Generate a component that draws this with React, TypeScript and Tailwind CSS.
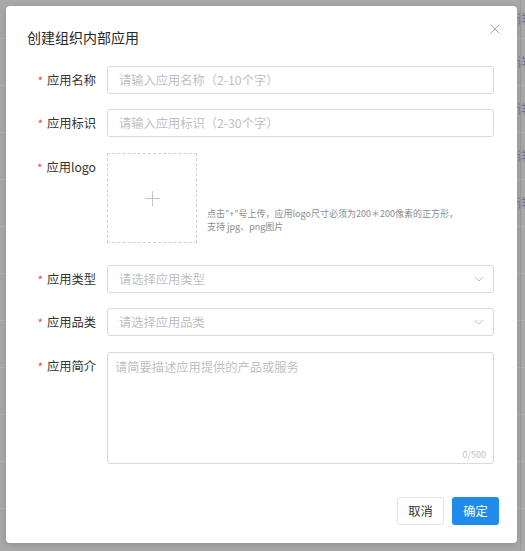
import { useState } from 'react';

const rows = Array.from({ length: 12 });

function Required({ label }: { label: string }) {
  return (
    <div className="w-[66px] h-[28px] flex items-center justify-end shrink-0 text-[12.25px] text-[#333333]">
      <span className="text-[#f04134] mr-[4px] text-[11px] leading-none">*</span>
      <span>{label}</span>
    </div>
  );
}

function Chevron() {
  return (
    <svg width="10" height="6" viewBox="0 0 10 6" fill="none" className="shrink-0">
      <path d="M1 1l4 4 4-4" stroke="#bfbfbf" strokeWidth="1" />
    </svg>
  );
}

export default function App() {
  const [name, setName] = useState('');
  const [ident, setIdent] = useState('');
  const [desc, setDesc] = useState('');

  return (
    <div className="relative w-[525px] h-[551px] overflow-hidden bg-[#a9a9a9] font-['Noto_Sans_CJK_SC',sans-serif]">
      {/* page behind the mask */}
      <div className="flex flex-col pt-[-8px]">
        {rows.map((_, i) => (
          <div key={i} className="h-[47px] shrink-0 flex items-center justify-end border-b border-[#b4b4b4] first:h-[39px]">
            <span className="w-[8px] overflow-hidden text-[12px] text-[#56729a] whitespace-nowrap">
              {i < 5 ? '详情' : ''}
            </span>
          </div>
        ))}
      </div>
      <div className="absolute top-0 bottom-0 right-[4px] w-px bg-[#9a9a9a]" />

      {/* dialog */}
      <div className="absolute left-[6px] top-[6px] w-[511px] h-[537px] bg-white rounded-[4px] shadow-[0_2px_8px_rgba(0,0,0,0.15)] flex flex-col">
        <div className="pt-[21px] pl-[21px] h-[41px] text-[14px] leading-[20px] text-[#262626]">
          创建组织内部应用
        </div>
        <button className="absolute right-[17px] top-[18px] w-[10px] h-[10px] flex items-center justify-center">
          <svg width="10" height="10" viewBox="0 0 10 10">
            <path d="M0.5 0.5l9 9M9.5 0.5l-9 9" stroke="#a6a6a6" strokeWidth="1" />
          </svg>
        </button>

        <div className="mt-[19px] pl-[24px] pr-[23px] flex flex-col">
          <div className="flex gap-[11px] mb-[15px]">
            <Required label="应用名称" />
            <input
              value={name}
              onChange={(e) => setName(e.target.value)}
              placeholder="请输入应用名称（2-10个字）"
              className="flex-1 h-[28px] border border-[#d9d9d9] rounded-[3px] px-[11px] text-[12.25px] text-[#333] placeholder:text-[#bfbfbf] outline-none"
            />
          </div>
          <div className="flex gap-[11px] mb-[16px]">
            <Required label="应用标识" />
            <input
              value={ident}
              onChange={(e) => setIdent(e.target.value)}
              placeholder="请输入应用标识（2-30个字）"
              className="flex-1 h-[28px] border border-[#d9d9d9] rounded-[3px] px-[11px] text-[12.25px] text-[#333] placeholder:text-[#bfbfbf] outline-none"
            />
          </div>
          <div className="flex gap-[11px] mb-[22px]">
            <Required label="应用logo" />
            <div className="flex items-end gap-[10px]">
              <div className="w-[90px] h-[90px] border border-dashed border-[#cfcfcf] flex items-center justify-center">
                <svg width="15" height="15" viewBox="0 0 15 15">
                  <path d="M7.5 0v15M0 7.5h15" stroke="#c4c4c4" strokeWidth="1" />
                </svg>
              </div>
              <div className="mb-[10px] text-[9px] leading-[13px] text-[#8c8c8c] whitespace-nowrap">
                <div>点击"+"号上传，应用logo尺寸必须为200＊200像素的正方形，</div>
                <div>支持 jpg、png图片</div>
              </div>
            </div>
          </div>
          <div className="flex gap-[11px] mb-[15px]">
            <Required label="应用类型" />
            <div className="flex-1 h-[28px] border border-[#d9d9d9] rounded-[3px] pl-[11px] pr-[9px] flex items-center justify-between text-[12.25px] text-[#bfbfbf]">
              <span>请选择应用类型</span>
              <Chevron />
            </div>
          </div>
          <div className="flex gap-[11px] mb-[16px]">
            <Required label="应用品类" />
            <div className="flex-1 h-[28px] border border-[#d9d9d9] rounded-[3px] pl-[11px] pr-[9px] flex items-center justify-between text-[12.25px] text-[#bfbfbf]">
              <span>请选择应用品类</span>
              <Chevron />
            </div>
          </div>
          <div className="flex gap-[11px]">
            <Required label="应用简介" />
            <div className="relative flex-1 h-[112px]">
              <textarea
                value={desc}
                onChange={(e) => setDesc(e.target.value)}
                placeholder="请简要描述应用提供的产品或服务"
                className="w-full h-full resize-none border border-[#d9d9d9] rounded-[3px] px-[7px] py-[4px] text-[12.25px] leading-[20px] text-[#333] placeholder:text-[#bfbfbf] outline-none"
              />
              <span className="absolute right-[8px] bottom-[3px] text-[9px] text-[#bfbfbf]">
                {desc.length}/500
              </span>
            </div>
          </div>
        </div>

        <div className="mt-[33px] pr-[18px] flex justify-end gap-[8px]">
          <button className="w-[47px] h-[28px] rounded-[3px] bg-white border border-[#e3e3e3] text-[12.25px] text-[#333]">
            取消
          </button>
          <button className="w-[47px] h-[28px] rounded-[3px] bg-[#1f8ceb] text-[12.25px] text-white">
            确定
          </button>
        </div>
      </div>
    </div>
  );
}
